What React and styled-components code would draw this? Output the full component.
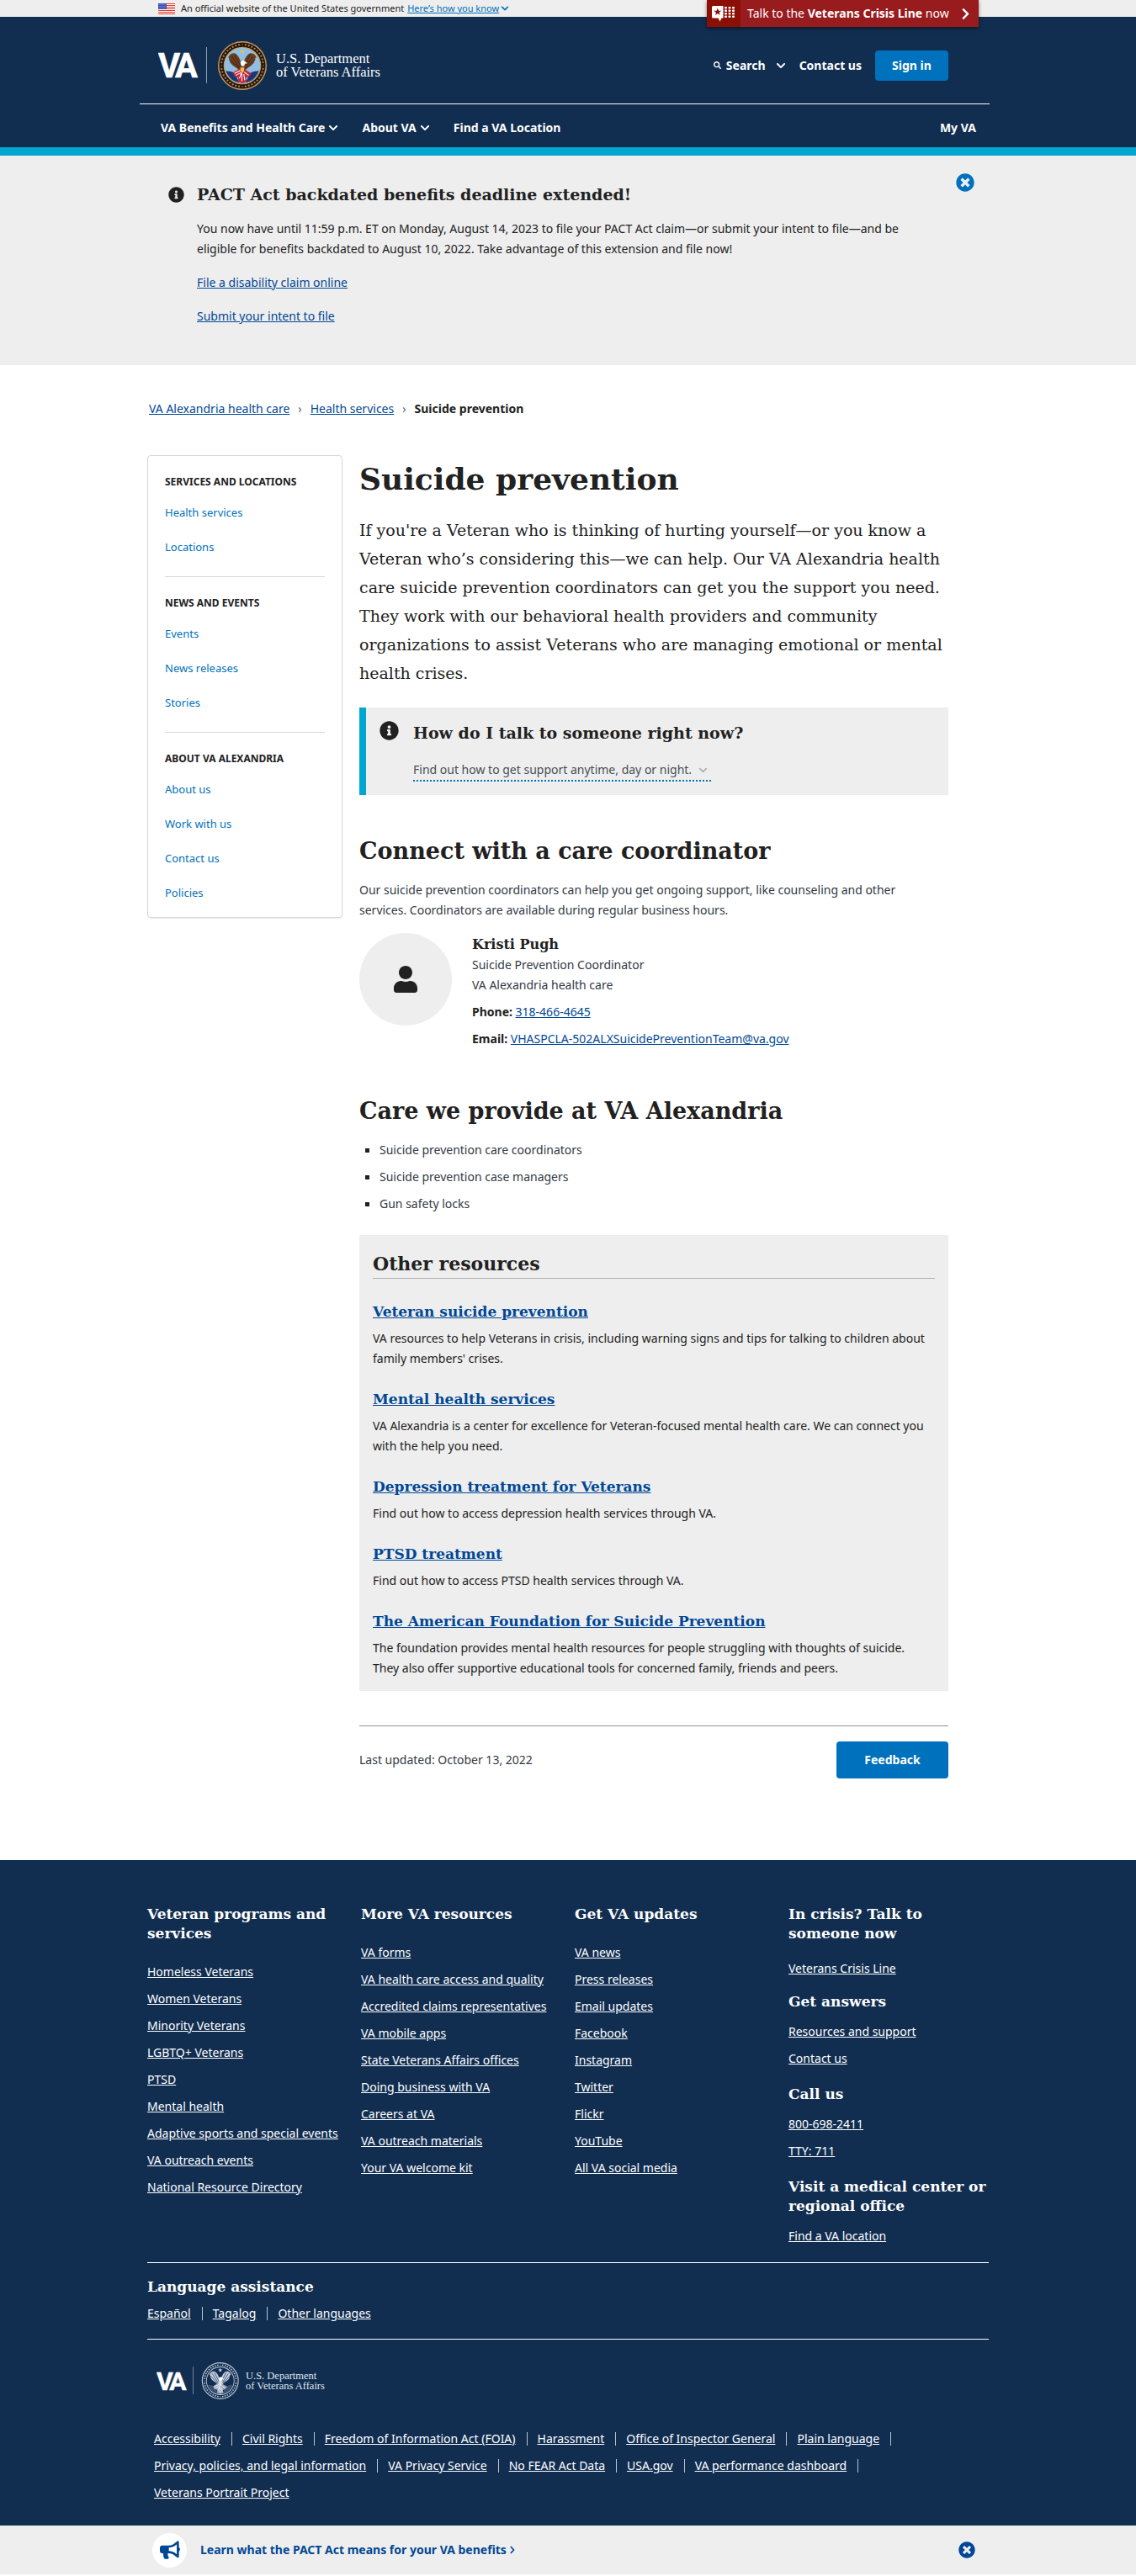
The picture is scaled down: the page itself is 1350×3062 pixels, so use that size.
import React from "react";
import styled, { createGlobalStyle, css } from "styled-components";
import {
  FaBullhorn,
  FaChevronDown,
  FaChevronRight,
  FaInfoCircle,
  FaSearch,
  FaTimesCircle,
  FaUser,
} from "react-icons/fa";

const sans = `"Noto Sans", "Open Sans", sans-serif`;
const slab = `"DejaVu Serif", serif`;

const color = {
  navy: "#112e51",
  cyan: "#00a6d2",
  blue: "#0071bc",
  link: "#004795",
  ink: "#212121",
  text: "#323a45",
  grey: "#eeeeee",
  rule: "#aeb0b5",
};

const GlobalStyle = createGlobalStyle`
  *, *::before, *::after { box-sizing: border-box; }
  body {
    margin: 0;
    background: #fff;
    color: ${color.text};
    font: 14px/24px ${sans};
  }
  h1, h2, h3, p, ul { margin: 0; padding: 0; }
  ul { list-style: none; }
  a { color: ${color.link}; }
  button { font-family: inherit; cursor: pointer; }
  svg { display: block; flex: none; }
`;

const Container = styled.div`
  max-width: 1000px;
  margin: 0 auto;
`;

/* ---------- Government banner ---------- */

const GovBanner = styled.div`
  background: ${color.grey};
`;

const GovInner = styled(Container)`
  display: flex;
  align-items: center;
  height: 20px;
  padding-left: 13px;
  font-size: 11px;
  line-height: 20px;
  color: ${color.ink};
`;

const GovText = styled.span`
  margin: 0 4px 0 7px;
`;

const GovButton = styled.button`
  display: flex;
  align-items: center;
  gap: 2px;
  padding: 0;
  border: 0;
  background: none;
  color: ${color.blue};
  font-size: 11px;
  line-height: 20px;

  span { text-decoration: underline; }
`;

/* ---------- Header ---------- */

const Header = styled.header`
  background: ${color.navy};
  border-bottom: 10px solid ${color.cyan};
  color: #fff;
`;

const BrandRow = styled.div`
  position: relative;
  display: flex;
  align-items: center;
  height: 103px;
  padding: 12px 48px 0 13px;
`;

const CrisisLink = styled.a`
  position: absolute;
  top: -20px;
  right: 12px;
  display: flex;
  align-items: center;
  width: 323px;
  height: 32px;
  background: #981b1e;
  box-shadow: 0 2px 4px rgba(0, 0, 0, 0.5);
  color: #fff;
  font-size: 14px;
  text-decoration: none;
`;

const CrisisIcon = styled.span`
  display: flex;
  flex: none;
  align-items: center;
  justify-content: center;
  width: 40px;
  height: 32px;
  margin-right: 8px;
  background: #8b0f04;
`;

const CrisisText = styled.span`
  flex: 1;
  white-space: nowrap;
`;

const CrisisArrow = styled.span`
  margin-right: 8px;
`;

const LogoLink = styled.a`
  display: block;
  margin-right: auto;
`;

const Tools = styled.div`
  display: flex;
  align-items: center;
`;

const navItem = css`
  display: flex;
  align-items: center;
  padding: 0;
  border: 0;
  background: none;
  color: #fff;
  font-size: 14px;
  font-weight: 700;
  line-height: 24px;
  text-decoration: none;
  white-space: nowrap;
`;

const NavButton = styled.button`
  ${navItem}
  gap: 4px;
`;

const NavLink = styled.a`
  ${navItem}
`;

const SearchButton = styled(NavButton)`
  gap: 6px;
  margin-right: 16px;

  svg:last-child { margin-left: 6px; }
`;

const PrimaryButton = styled.button`
  min-width: ${(p) => p.$width}px;
  height: ${(p) => p.$height}px;
  padding: 0 16px;
  border: 0;
  border-radius: 4px;
  background: ${color.blue};
  color: #fff;
  font-size: 14px;
  font-weight: 700;
  line-height: 24px;
`;

const SignIn = styled(PrimaryButton)`
  margin-left: 16px;
`;

const NavRow = styled.nav`
  display: flex;
  align-items: center;
  gap: 28px;
  height: 52px;
  margin: 0 -1px 0 -9px;
  padding: 5px 16px 0 25px;
  border-top: 1px solid #fff;

  > :last-child { margin-left: auto; }
`;

/* ---------- Promo alert ---------- */

const Promo = styled.section`
  background: ${color.grey};
`;

const PromoInner = styled(Container)`
  display: flex;
  align-items: flex-start;
  padding: 21px 17px 46px 25px;
`;

const PromoIcon = styled.span`
  margin: 16px 15px 0 0;
  color: ${color.ink};
`;

const PromoBody = styled.div`
  flex: 1;
  max-width: 850px;
  padding-top: 12px;
  color: ${color.ink};

  p { margin-top: 16px; }
`;

const SlabHeading = styled.h2`
  color: ${color.ink};
  font: 700 19px/26px ${slab};
`;

const CloseButton = styled.button`
  margin-left: auto;
  padding: 0;
  border: 0;
  background: none;
  color: ${(p) => p.$tone};
`;

/* ---------- Breadcrumb ---------- */

const Breadcrumb = styled.nav`
  padding: 40px 2px 43px;

  ul { display: flex; }
  li { display: flex; }
  li + li::before {
    content: "›";
    margin: 0 10px;
    color: #5b616b;
  }
  strong { color: ${color.ink}; }
`;

/* ---------- Body layout ---------- */

const Layout = styled(Container)`
  display: flex;
  align-items: flex-start;
  gap: 20px;
  padding-bottom: 97px;
`;

const SideNav = styled.nav`
  flex: 0 0 232px;
  padding: 0 20px 17px;
  border: 1px solid #d6d7d9;
  border-radius: 4px;
  box-shadow: 0 1px 1px rgba(0, 0, 0, 0.08);
`;

const SideGroup = styled.section`
  padding: 19px 0 23px;

  & + & { border-top: 1px solid #d6d7d9; }
  &:last-child { padding-bottom: 0; }

  h2 {
    margin-bottom: 12px;
    color: ${color.ink};
    font: 700 12px/24px ${sans};
  }
  li { font-size: 13px; }
  li + li { margin-top: 17px; }
  a { color: ${color.blue}; text-decoration: none; }
`;

const Main = styled.main`
  flex: 1;
  max-width: 700px;
`;

const Title = styled.h1`
  margin: 2px 0 18px;
  color: ${color.ink};
  font: 700 36px/52px ${slab};
`;

const Intro = styled.p`
  margin-bottom: 24px;
  color: ${color.ink};
  font: 19px/34px ${slab};
`;

const Callout = styled.section`
  display: flex;
  gap: 17px;
  margin-bottom: 49px;
  padding: 16px;
  border-left: 8px solid ${color.cyan};
  background: ${color.grey};
  color: ${color.ink};
`;

const CalloutBody = styled.div`
  padding-top: 1px;
`;

const ExpandButton = styled.button`
  display: flex;
  align-items: center;
  gap: 8px;
  margin-top: 19px;
  padding: 0 4px 0 0;
  border: 0;
  border-bottom: 2px dotted ${color.blue};
  background: none;
  color: #494f57;
  font-size: 14px;
  line-height: 24px;

  svg { color: ${color.rule}; }
`;

const SectionTitle = styled.h2`
  margin-bottom: 16px;
  color: ${color.ink};
  font: 700 27px/36px ${slab};
`;

const SectionText = styled.p`
  max-width: 690px;
`;

const Person = styled.div`
  display: flex;
  gap: 24px;
  margin: 15px 0 56px;
`;

const Avatar = styled.div`
  display: flex;
  align-items: center;
  justify-content: center;
  flex: none;
  width: 110px;
  height: 110px;
  border-radius: 50%;
  background: ${color.grey};
  color: ${color.ink};
`;

const PersonInfo = styled.div`
  padding-top: 2px;

  h3 { color: ${color.ink}; font: 700 16px/24px ${slab}; }
  strong { color: ${color.ink}; }
`;

const ContactLine = styled.p`
  margin-top: 8px;
`;

const CareList = styled.ul`
  margin-bottom: 25px;

  li {
    display: flex;
    align-items: center;
    padding-left: 7px;
  }
  li::before {
    content: "";
    width: 5px;
    height: 5px;
    margin-right: 12px;
    background: ${color.ink};
  }
  li + li { margin-top: 8px; }
`;

const Resources = styled.section`
  margin-bottom: 41px;
  padding: 18px 16px 15px;
  background: ${color.grey};
`;

const ResourcesTitle = styled.h2`
  margin-bottom: 27px;
  padding-bottom: 1px;
  border-bottom: 1px solid ${color.rule};
  color: ${color.ink};
  font: 700 22px/32px ${slab};
`;

const Resource = styled.article`
  & + & { margin-top: 24px; }

  h3 { margin-bottom: 8px; font: 700 17px/24px ${slab}; }
  p { max-width: 660px; color: ${color.ink}; }
`;

const UpdatedRow = styled.div`
  display: flex;
  align-items: center;
  justify-content: space-between;
  padding-top: 18px;
  border-top: 1px solid #8f9297;
`;

/* ---------- Footer ---------- */

const Footer = styled.footer`
  background: ${color.navy};
  color: #fff;

  a { color: #fff; }
`;

const FooterColumns = styled.div`
  display: grid;
  grid-template-columns: repeat(4, minmax(0, 1fr));
  gap: 16px;
  padding: 53px 0 19px;
`;

const FooterHeading = styled.h2`
  margin: ${(p) => p.$top || 0}px 0 ${(p) => p.$bottom}px;
  font: 700 17px/23px ${slab};
`;

const FooterList = styled.ul`
  li + li { margin-top: 8px; }
  a { white-space: nowrap; }
`;

const Language = styled.section`
  padding: 17px 0 18px;
  border: solid #fff;
  border-width: 1px 0;
`;

const InlineLinks = styled.ul`
  display: flex;
  flex-wrap: wrap;
  gap: 8px 12px;

  li { display: flex; align-items: center; }
  li:not(:last-child)::after {
    content: "";
    width: 1px;
    height: 16px;
    margin-left: 13px;
    background: #b8c4d0;
  }
`;

const FooterBottom = styled.div`
  padding: 27px 8px;
`;

const FooterLogo = styled.div`
  margin: 0 0 35px 3px;
`;

const Dock = styled.aside`
  background: ${color.grey};
`;

const DockInner = styled(Container)`
  display: flex;
  align-items: center;
  min-height: 58px;
  padding: 0 16px 0 6px;
`;

const DockIcon = styled.span`
  display: flex;
  align-items: center;
  justify-content: center;
  width: 41px;
  height: 41px;
  margin-right: 16px;
  border-radius: 50%;
  background: #fff;
  color: ${color.link};
`;

const DockLink = styled.a`
  display: flex;
  align-items: center;
  gap: 2px;
  font-weight: 700;
  text-decoration: none;
`;

/* ---------- Drawings ---------- */

const Flag = () => (
  <svg width="20" height="13" viewBox="0 0 20 13" aria-hidden="true">
    <rect width="20" height="13" fill="#fff" />
    {[0, 2, 4, 6, 8, 10, 12].map((y) => (
      <rect key={y} y={y} width="20" height="1" fill="#e0402f" />
    ))}
    <rect width="10" height="7" fill="#3c4fb5" />
    {[1, 3, 5].map((y) =>
      [1, 3, 5, 7].map((x) => (
        <circle key={`${x}-${y}`} cx={x + 1} cy={y + 0.5} r="0.4" fill="#fff" />
      ))
    )}
  </svg>
);

const CrisisMark = () => (
  <svg width="28" height="19" viewBox="0 0 28 19" fill="#fff" aria-hidden="true">
    <path d="M1.5 0H13.500v14.500h-2L9.500 18.500 7.500 14.500h-6A1.500 1.500 0 0 1 0 13V1.500A1.500 1.500 0 0 1 1.500 0z" />
    <path
      d="M6.800 2.500l1.200 3.200h3.300l-2.600 2 1 3.300-2.900-2-2.900 2 1-3.300-2.600-2h3.300z"
      fill="#8b0f04"
    />
    {[1, 4.500, 8, 11.500].map((y) =>
      [15, 19.500, 24].map((x) => (
        <rect key={`${x}-${y}`} x={x} y={y} width="3" height="2.400" rx="1" />
      ))
    )}
  </svg>
);

const ringDots = Array.from({ length: 40 }, (_, i) => {
  const a = (i / 40) * Math.PI * 2;
  return { x: 50 + Math.cos(a) * 43, y: 50 + Math.sin(a) * 43 };
});

const Seal = ({ mono }) => {
  const c = mono
    ? {
        rim: "#c3cddb", band: "#112e51", dots: "#c3cddb", sky: "#112e51",
        wing: "#c3cddb", wingLine: "#112e51", flag: "#9aa9bd", stripe: "#fff",
        head: "#fff", gold: "#dfe5ee", field: "#3a5273",
      }
    : {
        rim: "#c79a5b", band: "#23150f", dots: "#a98552", sky: "#8fc0e4",
        wing: "#6b3f22", wingLine: "#3d2010", flag: "#c4283a", stripe: "#fff",
        head: "#fff", gold: "#e8c04c", field: "#1f3672",
      };
  return (
    <g>
      <circle cx="50" cy="50" r="50" fill={c.rim} />
      <circle cx="50" cy="50" r="47.500" fill={c.band} />
      {ringDots.map((d, i) => (
        <circle key={i} cx={d.x} cy={d.y} r={i % 10 === 0 ? 1.300 : 2} fill={c.dots} />
      ))}
      <circle cx="50" cy="50" r="38.500" fill={c.rim} />
      <circle cx="50" cy="50" r="36.500" fill={c.sky} />
      <path d="M16 60c3 3 12 0 18 6l10 19c-14-2-24-12-28-25zM84 60c-3 3-12 0-18 6L56 85c14-2 24-12 28-25z" fill={c.field} />
      <path d="M50 15l1.500 4 4.300.1-3.400 2.600 1.200 4.200-3.600-2.500-3.600 2.500 1.200-4.200-3.400-2.600 4.300-.1z" fill={c.gold} />
      <path d="M21 33c3-7 9-10 14-8 7 3 10 12 13 19h4c3-7 6-16 13-19 5-2 11 1 14 8-2 0-3 2-3 5-1 5-4 9-8 12-5 4-9 5-11 9l-3 8H45l-3-8c-2-4-6-5-11-9-4-3-7-7-8-12 0-3-1-5-2-5z" fill={c.wing} />
      <path d="M28 30l16 25M34 27l12 24M24 37l18 19M72 30L56 55M66 27L54 51M76 37L58 56" stroke={c.wingLine} strokeWidth="1.500" fill="none" />
      <path d="M46 44c0-5 8-6 10-2l4 3-5 1-1 5h-6z" fill={c.head} />
      <path d="M56 44l4 2-4 1z" fill={c.gold} />
      <path d="M31 64l14-8 10 2 14 8-6 7-6 2 2 8-9 3-9-3 1-8-9-4z" fill={c.flag} />
      <path d="M34 66l12-6M36 70l12-6M44 76l4-11M49 82V66M55 80l-2-13M63 70l-9-7" stroke={c.stripe} strokeWidth="1.800" fill="none" />
      <path d="M46 54h8l-1 8-3 3-3-3z" fill={c.gold} />
    </g>
  );
};

const Logo = ({ mono, width, height }) => (
  <svg width={width} height={height} viewBox="0 0 268 58" role="img" aria-label="U.S. Department of Veterans Affairs">
    <g fill="#fff" fontFamily="Roboto, sans-serif" fontWeight="700" fontSize="40" stroke="#fff" strokeWidth="0.600">
      <text x="0" y="43">V</text>
      <text x="20" y="43">A</text>
    </g>
    <rect x="57" y="7" width="1" height="43" fill="#8fa0b6" />
    <g transform="translate(71 0) scale(0.580)">
      <Seal mono={mono} />
    </g>
    <g fill={mono ? "#dfe5ee" : "#fff"} fontFamily="'Liberation Serif', serif" fontSize="16.500">
      <text x="140" y="26">U.S. Department</text>
      <text x="140" y="42">of Veterans Affairs</text>
    </g>
  </svg>
);

/* ---------- Content ---------- */

const sideGroups = [
  { title: "SERVICES AND LOCATIONS", links: ["Health services", "Locations"] },
  { title: "NEWS AND EVENTS", links: ["Events", "News releases", "Stories"] },
  { title: "ABOUT VA ALEXANDRIA", links: ["About us", "Work with us", "Contact us", "Policies"] },
];

const resources = [
  ["Veteran suicide prevention", "VA resources to help Veterans in crisis, including warning signs and tips for talking to children about family members' crises."],
  ["Mental health services", "VA Alexandria is a center for excellence for Veteran-focused mental health care. We can connect you with the help you need."],
  ["Depression treatment for Veterans", "Find out how to access depression health services through VA."],
  ["PTSD treatment", "Find out how to access PTSD health services through VA."],
  ["The American Foundation for Suicide Prevention", "The foundation provides mental health resources for people struggling with thoughts of suicide. They also offer supportive educational tools for concerned family, friends and peers."],
];

const footerColumns = [
  {
    title: "Veteran programs and services",
    links: ["Homeless Veterans", "Women Veterans", "Minority Veterans", "LGBTQ+ Veterans", "PTSD", "Mental health", "Adaptive sports and special events", "VA outreach events", "National Resource Directory"],
  },
  {
    title: "More VA resources",
    links: ["VA forms", "VA health care access and quality", "Accredited claims representatives", "VA mobile apps", "State Veterans Affairs offices", "Doing business with VA", "Careers at VA", "VA outreach materials", "Your VA welcome kit"],
  },
  {
    title: "Get VA updates",
    links: ["VA news", "Press releases", "Email updates", "Facebook", "Instagram", "Twitter", "Flickr", "YouTube", "All VA social media"],
  },
];

const helpGroups = [
  { title: "In crisis? Talk to someone now", top: 0, bottom: 18, links: ["Veterans Crisis Line"] },
  { title: "Get answers", top: 16, bottom: 12, links: ["Resources and support", "Contact us"] },
  { title: "Call us", top: 19, bottom: 12, links: ["800-698-2411", "TTY: 711"] },
  { title: "Visit a medical center or regional office", top: 19, bottom: 12, links: ["Find a VA location"] },
];

const languages = ["Español", "Tagalog", "Other languages"];

const legalLinks = [
  "Accessibility", "Civil Rights", "Freedom of Information Act (FOIA)", "Harassment",
  "Office of Inspector General", "Plain language", "Privacy, policies, and legal information",
  "VA Privacy Service", "No FEAR Act Data", "USA.gov", "VA performance dashboard",
  "Veterans Portrait Project",
];

const LinkItems = ({ items }) =>
  items.map((item) => (
    <li key={item}>
      <a href="#">{item}</a>
    </li>
  ));

export default function App() {
  return (
    <>
      <GlobalStyle />
      <GovBanner>
        <GovInner>
          <Flag />
          <GovText>An official website of the United States government</GovText>
          <GovButton type="button">
            <span>Here’s how you know</span>
            <FaChevronDown size={10} />
          </GovButton>
        </GovInner>
      </GovBanner>

      <Header>
        <Container>
          <BrandRow>
            <CrisisLink href="#">
              <CrisisIcon>
                <CrisisMark />
              </CrisisIcon>
              <CrisisText>
                Talk to the <strong>Veterans Crisis Line</strong> now
              </CrisisText>
              <CrisisArrow>
                <FaChevronRight size={15} />
              </CrisisArrow>
            </CrisisLink>
            <LogoLink href="#">
              <Logo width={268} height={58} />
            </LogoLink>
            <Tools>
              <SearchButton type="button">
                <FaSearch size={9} />
                Search
                <FaChevronDown size={12} />
              </SearchButton>
              <NavLink href="#">Contact us</NavLink>
              <SignIn type="button" $width={87} $height={36}>
                Sign in
              </SignIn>
            </Tools>
          </BrandRow>
          <NavRow aria-label="Primary">
            <NavButton type="button">
              VA Benefits and Health Care
              <FaChevronDown size={12} />
            </NavButton>
            <NavButton type="button">
              About VA
              <FaChevronDown size={12} />
            </NavButton>
            <NavLink href="#">Find a VA Location</NavLink>
            <NavLink href="#">My VA</NavLink>
          </NavRow>
        </Container>
      </Header>

      <Promo>
        <PromoInner>
          <PromoIcon>
            <FaInfoCircle size={19} />
          </PromoIcon>
          <PromoBody>
            <SlabHeading>PACT Act backdated benefits deadline extended!</SlabHeading>
            <p>
              You now have until 11:59 p.m. ET on Monday, August 14, 2023 to file your PACT
              Act claim—or submit your intent to file—and be eligible for benefits backdated
              to August 10, 2022. Take advantage of this extension and file now!
            </p>
            <p>
              <a href="#">File a disability claim online</a>
            </p>
            <p>
              <a href="#">Submit your intent to file</a>
            </p>
          </PromoBody>
          <CloseButton type="button" aria-label="Close announcement" $tone={color.blue}>
            <FaTimesCircle size={22} />
          </CloseButton>
        </PromoInner>
      </Promo>

      <Container>
        <Breadcrumb aria-label="Breadcrumb">
          <ul>
            <li><a href="#">VA Alexandria health care</a></li>
            <li><a href="#">Health services</a></li>
            <li><strong>Suicide prevention</strong></li>
          </ul>
        </Breadcrumb>
      </Container>

      <Layout>
        <SideNav aria-label="VA Alexandria">
          {sideGroups.map((group) => (
            <SideGroup key={group.title}>
              <h2>{group.title}</h2>
              <ul>
                <LinkItems items={group.links} />
              </ul>
            </SideGroup>
          ))}
        </SideNav>

        <Main>
          <Title>Suicide prevention</Title>
          <Intro>
            If you're a Veteran who is thinking of hurting yourself—or you know a Veteran
            who’s considering this—we can help. Our VA Alexandria health care suicide
            prevention coordinators can get you the support you need. They work with our
            behavioral health providers and community organizations to assist Veterans who
            are managing emotional or mental health crises.
          </Intro>

          <Callout>
            <FaInfoCircle size={23} />
            <CalloutBody>
              <SlabHeading>How do I talk to someone right now?</SlabHeading>
              <ExpandButton type="button">
                Find out how to get support anytime, day or night.
                <FaChevronDown size={11} />
              </ExpandButton>
            </CalloutBody>
          </Callout>

          <SectionTitle>Connect with a care coordinator</SectionTitle>
          <SectionText>
            Our suicide prevention coordinators can help you get ongoing support, like
            counseling and other services. Coordinators are available during regular
            business hours.
          </SectionText>
          <Person>
            <Avatar>
              <FaUser size={32} />
            </Avatar>
            <PersonInfo>
              <h3>Kristi Pugh</h3>
              <p>Suicide Prevention Coordinator</p>
              <p>VA Alexandria health care</p>
              <ContactLine>
                <strong>Phone:</strong> <a href="#">318-466-4645</a>
              </ContactLine>
              <ContactLine>
                <strong>Email:</strong> <a href="#">VHASPCLA-502ALXSuicidePreventionTeam@va.gov</a>
              </ContactLine>
            </PersonInfo>
          </Person>

          <SectionTitle>Care we provide at VA Alexandria</SectionTitle>
          <CareList>
            <li>Suicide prevention care coordinators</li>
            <li>Suicide prevention case managers</li>
            <li>Gun safety locks</li>
          </CareList>

          <Resources>
            <ResourcesTitle>Other resources</ResourcesTitle>
            {resources.map(([title, text]) => (
              <Resource key={title}>
                <h3><a href="#">{title}</a></h3>
                <p>{text}</p>
              </Resource>
            ))}
          </Resources>

          <UpdatedRow>
            <span>Last updated: October 13, 2022</span>
            <PrimaryButton type="button" $width={133} $height={44}>
              Feedback
            </PrimaryButton>
          </UpdatedRow>
        </Main>
      </Layout>

      <Footer>
        <Container>
          <FooterColumns>
            {footerColumns.map((column) => (
              <section key={column.title}>
                <FooterHeading $bottom={22}>{column.title}</FooterHeading>
                <FooterList>
                  <LinkItems items={column.links} />
                </FooterList>
              </section>
            ))}
            <section>
              {helpGroups.map((group) => (
                <React.Fragment key={group.title}>
                  <FooterHeading $top={group.top} $bottom={group.bottom}>
                    {group.title}
                  </FooterHeading>
                  <FooterList>
                    <LinkItems items={group.links} />
                  </FooterList>
                </React.Fragment>
              ))}
            </section>
          </FooterColumns>

          <Language>
            <FooterHeading $bottom={8}>Language assistance</FooterHeading>
            <InlineLinks>
              <LinkItems items={languages} />
            </InlineLinks>
          </Language>

          <FooterBottom>
            <FooterLogo>
              <Logo mono width={203} height={44} />
            </FooterLogo>
            <InlineLinks>
              <LinkItems items={legalLinks} />
            </InlineLinks>
          </FooterBottom>
        </Container>
      </Footer>

      <Dock>
        <DockInner>
          <DockIcon>
            <FaBullhorn size={24} />
          </DockIcon>
          <DockLink href="#">
            Learn what the PACT Act means for your VA benefits
            <FaChevronRight size={10} />
          </DockLink>
          <CloseButton type="button" aria-label="Dismiss" $tone={color.link}>
            <FaTimesCircle size={20} />
          </CloseButton>
        </DockInner>
      </Dock>
    </>
  );
}
